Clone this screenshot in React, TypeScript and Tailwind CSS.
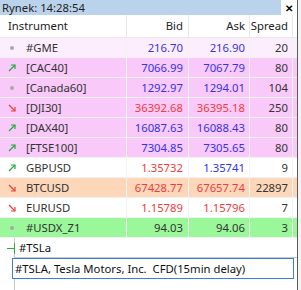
import React from 'react'

type Dir = 'up' | 'down' | 'flat'

interface Row {
  symbol: string
  bid: string
  ask: string
  spread: string
  dir: Dir
  bg: string
  bidColor: string
  askColor: string
}

const BLUE = 'text-[#3434f2]'
const RED = 'text-[#f23c3c]'
const DARK = 'text-[#333333]'

const ROWS: Row[] = [
  { symbol: '#GME', bid: '216.70', ask: '216.90', spread: '20', dir: 'flat', bg: 'bg-[#fdeefd]', bidColor: BLUE, askColor: BLUE },
  { symbol: '[CAC40]', bid: '7066.99', ask: '7067.79', spread: '80', dir: 'up', bg: 'bg-[#f9c9f9]', bidColor: BLUE, askColor: BLUE },
  { symbol: '[Canada60]', bid: '1292.97', ask: '1294.01', spread: '104', dir: 'flat', bg: 'bg-[#f9c9f9]', bidColor: BLUE, askColor: BLUE },
  { symbol: '[DJI30]', bid: '36392.68', ask: '36395.18', spread: '250', dir: 'down', bg: 'bg-[#f9c9f9]', bidColor: RED, askColor: RED },
  { symbol: '[DAX40]', bid: '16087.63', ask: '16088.43', spread: '80', dir: 'up', bg: 'bg-[#f9c9f9]', bidColor: BLUE, askColor: BLUE },
  { symbol: '[FTSE100]', bid: '7304.85', ask: '7305.65', spread: '80', dir: 'up', bg: 'bg-[#f9c9f9]', bidColor: BLUE, askColor: BLUE },
  { symbol: 'GBPUSD', bid: '1.35732', ask: '1.35741', spread: '9', dir: 'up', bg: 'bg-white', bidColor: RED, askColor: BLUE },
  { symbol: 'BTCUSD', bid: '67428.77', ask: '67657.74', spread: '22897', dir: 'down', bg: 'bg-[#fdd7b9]', bidColor: RED, askColor: RED },
  { symbol: 'EURUSD', bid: '1.15789', ask: '1.15796', spread: '7', dir: 'down', bg: 'bg-white', bidColor: RED, askColor: RED },
  { symbol: '#USDX_Z1', bid: '94.03', ask: '94.06', spread: '3', dir: 'flat', bg: 'bg-[#9af79a]', bidColor: DARK, askColor: DARK },
]

function DirIcon({ dir }: { dir: Dir }) {
  if (dir === 'flat') {
    return <span className="block h-[4px] w-[4px] rounded-full bg-[#a8a8a8]" />
  }
  const up = dir === 'up'
  return (
    <svg width="8" height="8" viewBox="0 0 8 8" fill="none" stroke={up ? '#1fae3a' : '#e8413c'} strokeWidth="1.2">
      {up ? (
        <>
          <path d="M1 7 L7 1" />
          <path d="M3 1 H7 V5" />
        </>
      ) : (
        <>
          <path d="M1 1 L7 7" />
          <path d="M3 7 H7 V3" />
        </>
      )}
    </svg>
  )
}

export default function App() {
  return (
    <div
      className="relative flex h-[290px] w-[301px] bg-[#f4f4f4] text-[11.3px] leading-none"
      style={{ fontFamily: '"Noto Sans", "Open Sans", sans-serif' }}
    >
      <div className="flex w-[298px] flex-col border-r border-[#5a5a5a] bg-white">
        {/* Title bar */}
        <div className="flex h-[15px] shrink-0">
          <div className="flex flex-1 items-center bg-[#bad2eb] pl-[2px] text-[#1e1e1e]">Rynek: 14:28:54</div>
          <div className="flex w-[16px] items-center justify-center text-[10px] font-bold text-black">✕</div>
        </div>

        {/* Header */}
        <div className="flex h-[23px] shrink-0 border-b border-[#e8e8e8] text-[#222]">
          <div className="flex w-[127px] items-center border-r border-[#e8e8e8] pl-[8px]">Instrument</div>
          <div className="flex w-[62px] items-center justify-end border-r border-[#e8e8e8] pr-[5px]">Bid</div>
          <div className="flex w-[61px] items-center justify-end border-r border-[#e8e8e8] pr-[4px]">Ask</div>
          <div className="flex w-[43px] items-center justify-end border-r border-[#e8e8e8] pr-[4px]">Spread</div>
        </div>

        {/* Rows */}
        {ROWS.map((r) => (
          <div key={r.symbol} className={`flex h-[20px] shrink-0 border-b border-[#f2f2f2] ${r.bg}`}>
            <div className="flex w-[127px] items-center border-r border-[#f2f2f2]">
              <div className="flex w-[26px] items-center justify-center pr-[3px]">
                <DirIcon dir={r.dir} />
              </div>
              <span className="text-[#333]">{r.symbol}</span>
            </div>
            <div className={`flex w-[62px] items-center justify-end border-r border-[#f2f2f2] pr-[5px] ${r.bidColor}`}>{r.bid}</div>
            <div className={`flex w-[61px] items-center justify-end border-r border-[#f2f2f2] pr-[4px] ${r.askColor}`}>{r.ask}</div>
            <div className="flex w-[43px] items-center justify-end border-r border-[#f2f2f2] pr-[4px] text-[#333]">{r.spread}</div>
          </div>
        ))}

        {/* Input + autocomplete */}
        <div className="flex flex-1">
          <div className="relative w-[15px] border-r border-[#c8c8c8]">
            <span className="absolute left-[7px] top-[10px] h-[1px] w-[8px] bg-[#2fae3a]" />
            <span className="absolute left-[14px] top-[5px] h-[11px] w-[1px] bg-[#2fae3a]" />
          </div>
          <div className="flex flex-1 flex-col">
            <div className="flex h-[20px] items-center border-b border-[#c8c8c8] pl-[4px] pr-[3px] text-[#111]">#TSLa</div>
          </div>
        </div>
      </div>

      {/* Dropdown */}
      <div className="absolute left-[12px] top-[258px] flex h-[21px] w-[282px] items-center border border-[#3c7fd0] bg-white pl-[2px] text-[#111]">
        #TSLA, Tesla Motors, Inc.&nbsp;&nbsp;CFD(15min delay)
      </div>
    </div>
  )
}
